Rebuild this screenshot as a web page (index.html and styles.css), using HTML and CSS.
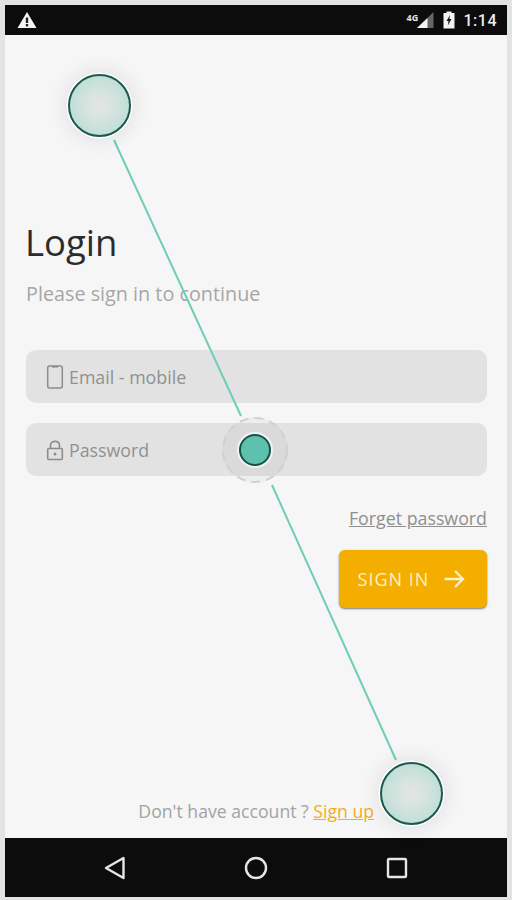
FILE: index.html
```html
<!DOCTYPE html>
<html lang="en">
<head>
    <meta charset="UTF-8">
    <meta name="viewport" content="width=device-width, initial-scale=1.0">
    <title>Login</title>
    <link rel="stylesheet" href="styles.css">
</head>
<body>
    <div class="phone">
        <div class="status-bar">
            <svg class="warn-icon" width="20" height="18" viewBox="0 0 20 18">
                <path d="M10 1 L19.500 17 H0.500 Z" fill="#f4f4f4"/>
                <rect x="8.800" y="6.500" width="2.400" height="5.500" fill="#222"/>
                <rect x="8.800" y="13" width="2.400" height="2.400" fill="#222"/>
            </svg>
            <div class="status-right">
                <span class="net-label">4G</span>
                <svg class="signal-icon" width="18" height="18" viewBox="0 0 18 18">
                    <path d="M17.500 1 V17 H1 Z" fill="#666"/>
                    <path d="M11.500 7 V17 H1 Z" fill="#f4f4f4"/>
                </svg>
                <svg class="battery-icon" width="12" height="18" viewBox="0 0 12 18">
                    <path d="M3.500 0.500 H8.500 V2 H11.500 V17.500 H0.500 V2 H3.500 Z" fill="#f4f4f4"/>
                    <path d="M7 4 L3.500 10 H5.500 L4.800 14.500 L8.500 8 H6.300 Z" fill="#111"/>
                </svg>
                <span class="clock">1:14</span>
            </div>
        </div>

        <div class="screen">
            <h1 class="title">Login</h1>
            <p class="subtitle">Please sign in to continue</p>

            <div class="field field-email">
                <svg class="field-icon" width="18" height="24" viewBox="0 0 18 24">
                    <rect x="1.700" y="1" width="14.600" height="22" rx="2" fill="none" stroke="#8c8c8c" stroke-width="1.500"/>
                    <rect x="6" y="1" width="6" height="1.600" fill="#8c8c8c"/>
                </svg>
                <span>Email - mobile</span>
            </div>

            <div class="field field-password">
                <svg class="field-icon" width="18" height="22" viewBox="0 0 18 22">
                    <path d="M4.500 10 V6.500 C4.500 1 13.500 1 13.500 6.500 V10" fill="none" stroke="#8c8c8c" stroke-width="1.600"/>
                    <rect x="1.700" y="9.500" width="14.600" height="11" rx="1" fill="none" stroke="#8c8c8c" stroke-width="1.600"/>
                    <circle cx="9" cy="15" r="1.500" fill="#8c8c8c"/>
                </svg>
                <span>Password</span>
            </div>

            <a class="forget-link">Forget password</a>

            <button class="signin-button">
                SIGN IN
                <svg width="22" height="20" viewBox="0 0 22 20">
                    <path d="M1.500 10 H20 M12 2 L20 10 L12 18" fill="none" stroke="#fbeecb" stroke-width="2.400"/>
                </svg>
            </button>

            <p class="signup-row">Don't have account ? <a class="signup-link">Sign up</a></p>
        </div>

        <div class="nav-bar">
            <svg width="22" height="24" viewBox="0 0 22 24">
                <path d="M19.500 2 V22 L2 12 Z" fill="none" stroke="#e6e6e6" stroke-width="2.400" stroke-linejoin="round"/>
            </svg>
            <svg width="24" height="24" viewBox="0 0 24 24">
                <circle cx="12" cy="12" r="10" fill="none" stroke="#e6e6e6" stroke-width="2.400"/>
            </svg>
            <svg width="22" height="22" viewBox="0 0 22 22">
                <rect x="2" y="2" width="18" height="18" rx="1" fill="none" stroke="#e6e6e6" stroke-width="2.400"/>
            </svg>
        </div>
    </div>

    <!-- coach mark drawn over the form -->
    <svg class="coach-lines" width="512" height="900" viewBox="0 0 512 900">
        <line x1="114" y1="140" x2="241" y2="416" stroke="#6fcdb9" stroke-width="2"/>
        <line x1="272" y1="485" x2="396" y2="760" stroke="#6fcdb9" stroke-width="2"/>
    </svg>
    <div class="coach-circle coach-top"></div>
    <div class="coach-circle coach-bottom"></div>
    <div class="coach-ring">
        <svg class="coach-dashes" width="66" height="66" viewBox="0 0 66 66">
            <circle cx="33" cy="33" r="32" fill="none" stroke="#cdd2d0" stroke-width="2" stroke-dasharray="9 6"/>
        </svg>
        <div class="coach-dot"></div>
    </div>
</body>
</html>
```

FILE: styles.css
```css
* {
    box-sizing: border-box;
}

body {
    margin: 0;
    height: 900px;
    padding: 5px;
    overflow: hidden;
    background-color: #e3e3e3;
    font-family: "Open Sans", sans-serif;
}

.phone {
    height: 892px;
    display: flex;
    flex-direction: column;
}

.status-bar {
    height: 30px;
    flex: none;
    background-color: #0c0c0c;
    display: flex;
    justify-content: space-between;
    align-items: center;
    padding: 0 10px 0 12px;
}

.status-right {
    display: flex;
    align-items: center;
    position: relative;
}

.net-label {
    position: absolute;
    left: 0;
    top: 0;
    font-size: 9px;
    font-weight: 700;
    color: #e8e8e8;
}

.signal-icon {
    margin-left: 9px;
}

.battery-icon {
    margin-left: 9px;
}

.clock {
    margin-left: 9px;
    font-family: Roboto, sans-serif;
    font-size: 16px;
    font-weight: 500;
    color: #ececec;
    letter-spacing: 0.5px;
}

.screen {
    flex: 1;
    background-color: #f6f6f6;
    padding: 0 20px 0 21px;
    display: flex;
    flex-direction: column;
}

.title {
    margin: 182px 0 0 -1px;
    font-size: 36.500px;
    font-weight: 400;
    line-height: 50px;
    color: #2c2c2c;
}

.subtitle {
    margin: 13px 0 0;
    font-size: 19.800px;
    line-height: 28px;
    color: #a6a6a6;
}

.field {
    height: 53px;
    background-color: #e2e2e2;
    border-radius: 10px;
    display: flex;
    align-items: center;
    padding-left: 20px;
    gap: 5px;
    font-size: 17.800px;
    color: #919191;
}

.field-email {
    margin-top: 42px;
}

.field-password {
    margin-top: 20px;
}

.forget-link {
    margin-top: 29px;
    align-self: flex-end;
    font-size: 17.800px;
    line-height: 26px;
    color: #8f8f8f;
    text-decoration: underline;
}

.signin-button {
    margin-top: 19px;
    align-self: flex-end;
    width: 148px;
    height: 58px;
    border: none;
    border-radius: 6px;
    background-color: #f4ae00;
    box-shadow: 0 1px 2px rgba(0, 0, 0, 0.5);
    color: #fbeecb;
    font-family: "Open Sans", sans-serif;
    font-size: 18px;
    letter-spacing: 1px;
    display: flex;
    align-items: center;
    justify-content: center;
    gap: 14px;
    padding: 0 3px 0 0;
}

.signup-row {
    margin: auto 113px 14px 0;
    align-self: flex-end;
    font-size: 17.650px;
    line-height: 26px;
    color: #a3a3a3;
}

.signup-link {
    color: #f2ae22;
    text-decoration: underline;
}

.nav-bar {
    height: 59px;
    flex: none;
    background-color: #0c0c0c;
    display: flex;
    justify-content: space-between;
    align-items: center;
    padding: 0 99px 0 99px;
}

.coach-lines {
    position: absolute;
    left: 0;
    top: 0;
}

.coach-circle {
    position: absolute;
    width: 63px;
    height: 63px;
    border-radius: 50%;
    border: 2px solid #1c5a50;
    background: radial-gradient(circle, #e4e4e4 0%, #d8e4e0 30%, #aedccf 100%);
    box-shadow: 0 0 0 1.500px #fff, 0 0 18px 6px rgba(0, 0, 0, 0.07);
}

.coach-top {
    left: 68px;
    top: 74px;
}

.coach-bottom {
    left: 380px;
    top: 762px;
}

.coach-ring {
    position: absolute;
    left: 222px;
    top: 417px;
    width: 66px;
    height: 66px;
    border-radius: 50%;
    background-color: rgba(0, 0, 0, 0.03);
    display: flex;
    align-items: center;
    justify-content: center;
}

.coach-dashes {
    position: absolute;
    left: 0;
    top: 0;
}

.coach-dot {
    width: 32px;
    height: 32px;
    border-radius: 50%;
    border: 2px solid #17524a;
    background-color: #5dc1ae;
    box-shadow: 0 0 0 2px #f2f2f2;
}
```
